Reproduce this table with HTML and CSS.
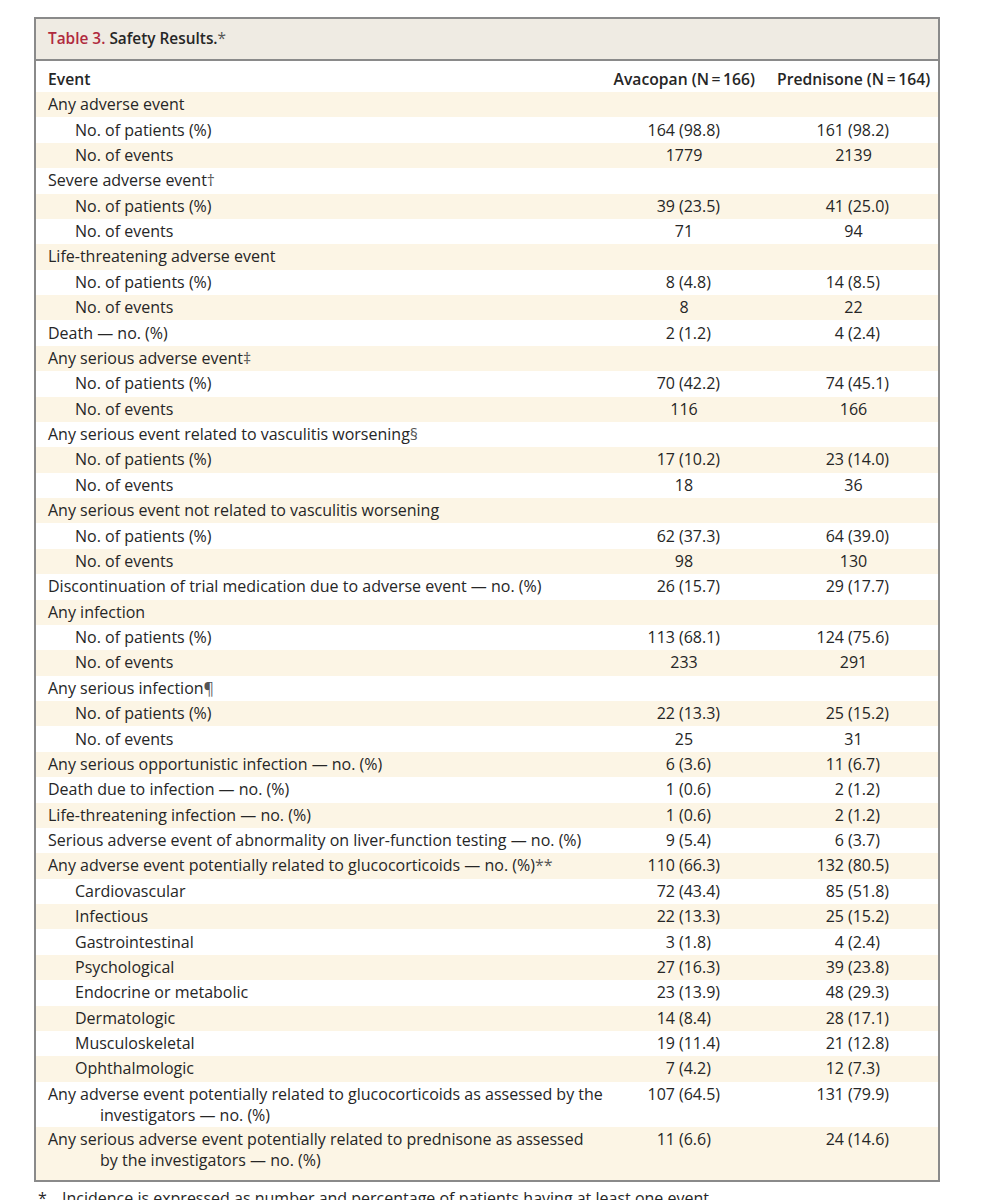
FILE: index.html
```html
<!DOCTYPE html>
<html lang="en">
<head>
<meta charset="UTF-8">
<meta name="viewport" content="width=device-width, initial-scale=1.0">
<title>Table 3. Safety Results</title>
<link rel="stylesheet" href="styles.css">
</head>
<body>
    <div class="table-box">
        <div class="caption"><span class="caption-num">Table 3.</span> Safety Results.<span class="sym">*</span></div>

        <div class="row head">
            <div class="label">Event</div>
            <div class="col">Avacopan (N&#8201;=&#8201;166)</div>
            <div class="col">Prednisone (N&#8201;=&#8201;164)</div>
        </div>

        <div class="row alt"><div class="label">Any adverse event</div><div></div><div></div></div>
        <div class="row"><div class="label sub">No. of patients (%)</div><div class="pair av"><span>164</span><span>(98.8)</span></div><div class="pair pr"><span>161</span><span>(98.2)</span></div></div>
        <div class="row alt"><div class="label sub">No. of events</div><div class="plain">1779</div><div class="plain">2139</div></div>

        <div class="row"><div class="label">Severe adverse event<span class="sym">†</span></div><div></div><div></div></div>
        <div class="row alt"><div class="label sub">No. of patients (%)</div><div class="pair av"><span>39</span><span>(23.5)</span></div><div class="pair pr"><span>41</span><span>(25.0)</span></div></div>
        <div class="row"><div class="label sub">No. of events</div><div class="plain">71</div><div class="plain">94</div></div>

        <div class="row alt"><div class="label">Life-threatening adverse event</div><div></div><div></div></div>
        <div class="row"><div class="label sub">No. of patients (%)</div><div class="pair av"><span>8</span><span>(4.8)</span></div><div class="pair pr"><span>14</span><span>(8.5)</span></div></div>
        <div class="row alt"><div class="label sub">No. of events</div><div class="plain">8</div><div class="plain">22</div></div>

        <div class="row"><div class="label">Death — no. (%)</div><div class="pair av"><span>2</span><span>(1.2)</span></div><div class="pair pr"><span>4</span><span>(2.4)</span></div></div>

        <div class="row alt"><div class="label">Any serious adverse event<span class="sym">‡</span></div><div></div><div></div></div>
        <div class="row"><div class="label sub">No. of patients (%)</div><div class="pair av"><span>70</span><span>(42.2)</span></div><div class="pair pr"><span>74</span><span>(45.1)</span></div></div>
        <div class="row alt"><div class="label sub">No. of events</div><div class="plain">116</div><div class="plain">166</div></div>

        <div class="row"><div class="label">Any serious event related to vasculitis worsening<span class="sym">§</span></div><div></div><div></div></div>
        <div class="row alt"><div class="label sub">No. of patients (%)</div><div class="pair av"><span>17</span><span>(10.2)</span></div><div class="pair pr"><span>23</span><span>(14.0)</span></div></div>
        <div class="row"><div class="label sub">No. of events</div><div class="plain">18</div><div class="plain">36</div></div>

        <div class="row alt"><div class="label">Any serious event not related to vasculitis worsening</div><div></div><div></div></div>
        <div class="row"><div class="label sub">No. of patients (%)</div><div class="pair av"><span>62</span><span>(37.3)</span></div><div class="pair pr"><span>64</span><span>(39.0)</span></div></div>
        <div class="row alt"><div class="label sub">No. of events</div><div class="plain">98</div><div class="plain">130</div></div>

        <div class="row"><div class="label">Discontinuation of trial medication due to adverse event — no. (%)</div><div class="pair av"><span>26</span><span>(15.7)</span></div><div class="pair pr"><span>29</span><span>(17.7)</span></div></div>

        <div class="row alt"><div class="label">Any infection</div><div></div><div></div></div>
        <div class="row"><div class="label sub">No. of patients (%)</div><div class="pair av"><span>113</span><span>(68.1)</span></div><div class="pair pr"><span>124</span><span>(75.6)</span></div></div>
        <div class="row alt"><div class="label sub">No. of events</div><div class="plain">233</div><div class="plain">291</div></div>

        <div class="row"><div class="label">Any serious infection<span class="sym">¶</span></div><div></div><div></div></div>
        <div class="row alt"><div class="label sub">No. of patients (%)</div><div class="pair av"><span>22</span><span>(13.3)</span></div><div class="pair pr"><span>25</span><span>(15.2)</span></div></div>
        <div class="row"><div class="label sub">No. of events</div><div class="plain">25</div><div class="plain">31</div></div>

        <div class="row alt"><div class="label">Any serious opportunistic infection — no. (%)</div><div class="pair av"><span>6</span><span>(3.6)</span></div><div class="pair pr"><span>11</span><span>(6.7)</span></div></div>
        <div class="row"><div class="label">Death due to infection — no. (%)</div><div class="pair av"><span>1</span><span>(0.6)</span></div><div class="pair pr"><span>2</span><span>(1.2)</span></div></div>
        <div class="row alt"><div class="label">Life-threatening infection — no. (%)</div><div class="pair av"><span>1</span><span>(0.6)</span></div><div class="pair pr"><span>2</span><span>(1.2)</span></div></div>
        <div class="row"><div class="label">Serious adverse event of abnormality on liver-function testing — no. (%)</div><div class="pair av"><span>9</span><span>(5.4)</span></div><div class="pair pr"><span>6</span><span>(3.7)</span></div></div>
        <div class="row alt"><div class="label">Any adverse event potentially related to glucocorticoids — no. (%)<span class="sym">**</span></div><div class="pair av"><span>110</span><span>(66.3)</span></div><div class="pair pr"><span>132</span><span>(80.5)</span></div></div>
        <div class="row"><div class="label sub">Cardiovascular</div><div class="pair av"><span>72</span><span>(43.4)</span></div><div class="pair pr"><span>85</span><span>(51.8)</span></div></div>
        <div class="row alt"><div class="label sub">Infectious</div><div class="pair av"><span>22</span><span>(13.3)</span></div><div class="pair pr"><span>25</span><span>(15.2)</span></div></div>
        <div class="row"><div class="label sub">Gastrointestinal</div><div class="pair av"><span>3</span><span>(1.8)</span></div><div class="pair pr"><span>4</span><span>(2.4)</span></div></div>
        <div class="row alt"><div class="label sub">Psychological</div><div class="pair av"><span>27</span><span>(16.3)</span></div><div class="pair pr"><span>39</span><span>(23.8)</span></div></div>
        <div class="row"><div class="label sub">Endocrine or metabolic</div><div class="pair av"><span>23</span><span>(13.9)</span></div><div class="pair pr"><span>48</span><span>(29.3)</span></div></div>
        <div class="row alt"><div class="label sub">Dermatologic</div><div class="pair av"><span>14</span><span>(8.4)</span></div><div class="pair pr"><span>28</span><span>(17.1)</span></div></div>
        <div class="row"><div class="label sub">Musculoskeletal</div><div class="pair av"><span>19</span><span>(11.4)</span></div><div class="pair pr"><span>21</span><span>(12.8)</span></div></div>
        <div class="row alt"><div class="label sub">Ophthalmologic</div><div class="pair av"><span>7</span><span>(4.2)</span></div><div class="pair pr"><span>12</span><span>(7.3)</span></div></div>
        <div class="row two"><div class="label hang">Any adverse event potentially related to glucocorticoids as assessed by the<br>investigators — no. (%)</div><div class="pair av"><span>107</span><span>(64.5)</span></div><div class="pair pr"><span>131</span><span>(79.9)</span></div></div>
        <div class="row two alt last"><div class="label hang">Any serious adverse event potentially related to prednisone as assessed<br>by the investigators — no. (%)</div><div class="pair av"><span>11</span><span>(6.6)</span></div><div class="pair pr"><span>24</span><span>(14.6)</span></div></div>
    </div>

    <div class="footnote"><span class="mark">*</span>Incidence is expressed as number and percentage of patients having at least one event.</div>
</body>
</html>
```

FILE: styles.css
```css
body {
    margin: 0;
    font-family: "Open Sans", Lato, sans-serif;
    font-size: 16px;
    color: #262626;
    background-color: #fff;
}
.table-box {
    box-sizing: border-box;
    width: 906px;
    margin: 17px 0 0 34px;
    border: 2px solid #8a8a8a;
}
.caption {
    height: 40px;
    line-height: 40px;
    padding-left: 12px;
    font-size: 15.4px;
    font-weight: 600;
    background-color: #efebe3;
    border-bottom: 2px solid #8a8a8a;
}
.caption-num {
    color: #b02a3e;
}
.sym {
    font-weight: normal;
    color: #555;
}
.row {
    display: grid;
    grid-template-columns: minmax(0, 1fr) 142px 153px;
    column-gap: 22px;
    padding: 3.2px 8px 3.2px 12px;
    line-height: 19px;
}
.row.alt {
    background-color: #fcf5e5;
}
.row.head {
    padding-top: 9px;
    padding-bottom: 3px;
    font-size: 15.7px;
    font-weight: 600;
}
.row.two {
    padding-top: 1.9px;
    padding-bottom: 1.9px;
    line-height: 21px;
}
.row.two .pair {
    line-height: 19px;
    padding-top: 1px;
}
.row.last {
    padding-bottom: 8.7px;
}
.head .col {
    text-align: right;
    white-space: nowrap;
}
.label {
    white-space: nowrap;
}
.label.sub {
    padding-left: 27px;
}
.label.hang {
    padding-left: 52px;
    text-indent: -52px;
}
.plain {
    text-align: center;
}
.pair {
    display: grid;
    grid-template-columns: var(--paren) auto;
}
.pair span:first-child {
    text-align: right;
    padding-right: 4px;
}
.pair.av {
    --paren: 66px;
}
.pair.pr {
    --paren: 71px;
}
.footnote {
    margin: 7px 0 0 38px;
    line-height: 19px;
}
.footnote .mark {
    display: inline-block;
    width: 24px;
}
```
